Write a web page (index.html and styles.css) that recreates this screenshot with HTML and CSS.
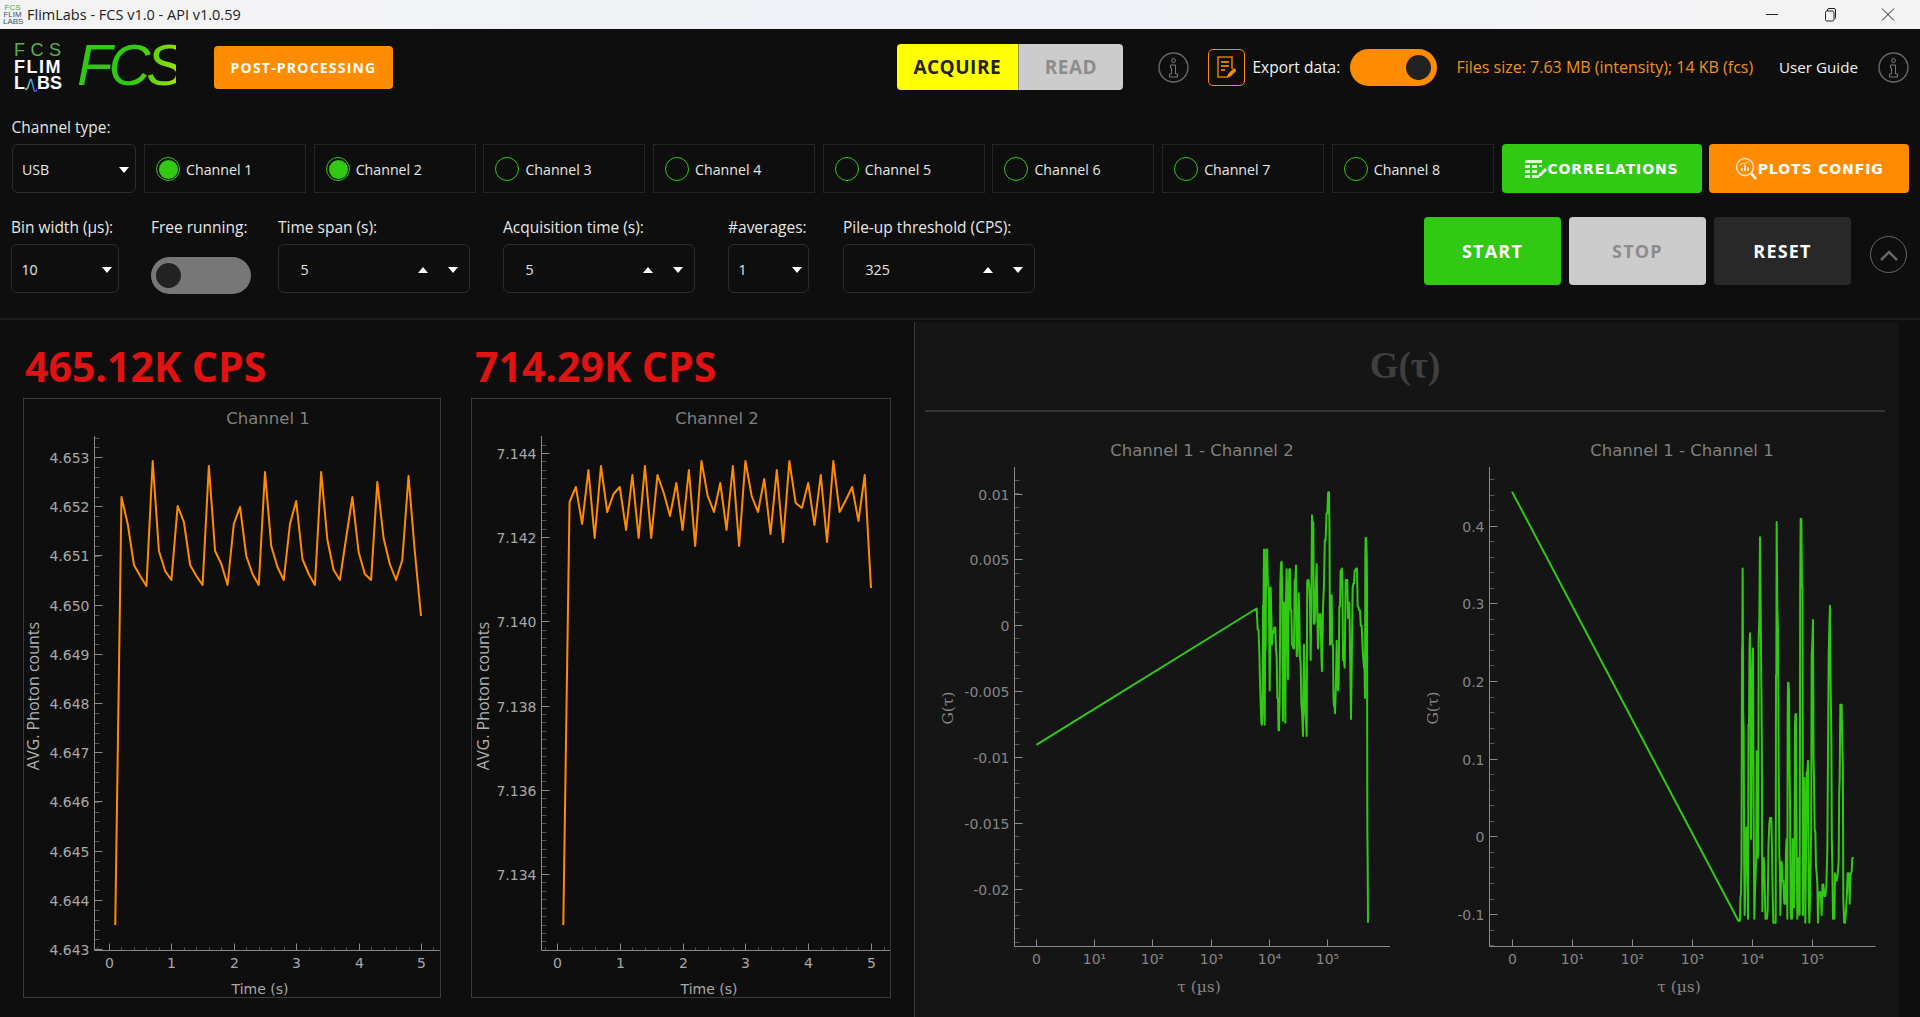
FILE: index.html
```html
<!DOCTYPE html>
<html lang="en">

<head>
    <meta charset="UTF-8" />
    <title>FlimLabs - FCS v1.0 - API v1.0.59</title>
    <link rel="stylesheet" href="styles.css">
</head>

<body>
    <div class="titlebar">
        <div class="title-logo">
            <span class="title-logo-fcs">FCS</span>
            <span>FLIM</span>
            <span>LABS</span>
        </div>
        <span class="title-text">FlimLabs - FCS v1.0 - API v1.0.59</span>
        <div class="window-btns">
            <svg width="58" height="29" viewBox="0 0 58 29"><path d="M23 14.5h12" stroke="#222" fill="none" /></svg>
            <svg width="58" height="29" viewBox="0 0 58 29"><path d="M24.5 12.5q0-1.500 1.500-1.500h5.500q1.500 0 1.500 1.500v7q0 1.500-1.500 1.500h-5.500q-1.500 0-1.500-1.500zM26.500 11v-1q0-1.500 1.500-1.500h5q1.500 0 1.500 1.500v7.500q0 1.200-1 1.500" stroke="#222" fill="none" /></svg>
            <svg width="58" height="29" viewBox="0 0 58 29"><path d="M23 8.500l12 12M35 8.500l-12 12" stroke="#222" fill="none" /></svg>
        </div>
    </div>

    <div class="toolbar">
        <div class="top-row">
            <div class="logo">
                <span class="logo-fcs">FCS</span>
                <span class="logo-flim">FLIM</span>
                <span class="logo-labs">L<svg width="15" height="16" viewBox="0 0 15 16"><defs><linearGradient id="wave" x1="0" x2="1"><stop offset="0" stop-color="#6fe0c0" /><stop offset="0.6" stop-color="#3a9ad0" /><stop offset="1" stop-color="#5a30d0" /></linearGradient></defs><path d="M0 14Q3 16 5 8T8 3T11 14T15 14" stroke="url(#wave)" stroke-width="2" fill="none" /></svg>BS</span>
            </div>
            <span class="brand">FCS</span>
            <button class="post-btn">POST-PROCESSING</button>

            <div class="top-right">
                <div class="mode-switch">
                    <span class="mode mode-acquire">ACQUIRE</span>
                    <span class="mode mode-read">READ</span>
                </div>
                <svg class="info-icon info-first" width="31" height="31" viewBox="0 0 31 31">
                    <circle cx="15.500" cy="15.500" r="14.500" stroke="#666" stroke-width="1.500" fill="none" />
                    <circle cx="15.500" cy="8.500" r="2" stroke="#777" fill="none" />
                    <path d="M12.500 13h5v9h2v3h-8v-3h2v-6h-1z" stroke="#777" fill="none" />
                </svg>
                <div class="export-icon">
                    <svg width="20" height="25" viewBox="0 0 20 25">
                        <path d="M12 22H2V2h14v12" stroke="#d97800" stroke-width="1.600" fill="none" />
                        <path d="M5 7h8M5 11h8M5 15h4" stroke="#d97800" stroke-width="2" fill="none" />
                        <path d="M11 23l1-4 6-6 2.500 2.500-6 6z" fill="#ff8c00" />
                    </svg>
                </div>
                <span class="export-label">Export data:</span>
                <div class="switch switch-on"><span class="knob"></span></div>
                <span class="files-size">Files size: 7.63 MB (intensity); 14 KB (fcs)</span>
                <span class="user-guide">User Guide</span>
                <svg class="info-icon" width="31" height="31" viewBox="0 0 31 31">
                    <circle cx="15.500" cy="15.500" r="14.500" stroke="#666" stroke-width="1.500" fill="none" />
                    <circle cx="15.500" cy="8.500" r="2" stroke="#777" fill="none" />
                    <path d="M12.500 13h5v9h2v3h-8v-3h2v-6h-1z" stroke="#777" fill="none" />
                </svg>
            </div>
        </div>

        <div class="channel-row">
            <div class="field">
                <label>Channel type:</label>
                <div class="control select-usb"><span>USB</span><i class="arrow-down"></i></div>
            </div>
            <div class="channels">
                <div class="channel"><span class="radio radio-on"></span>Channel 1</div>
                <div class="channel"><span class="radio radio-on"></span>Channel 2</div>
                <div class="channel"><span class="radio"></span>Channel 3</div>
                <div class="channel"><span class="radio"></span>Channel 4</div>
                <div class="channel"><span class="radio"></span>Channel 5</div>
                <div class="channel"><span class="radio"></span>Channel 6</div>
                <div class="channel"><span class="radio"></span>Channel 7</div>
                <div class="channel"><span class="radio"></span>Channel 8</div>
                <button class="action-btn btn-green">
                    <svg width="23" height="20" viewBox="0 0 23 20">
                        <path d="M1 1h17v3H1zM1 6h5v3H1zM8 6h5v3H8zM15 6h3v2h-3zM1 11h5v3H1zM8 11h5v3H8zM1 16h5v3H1zM8 16h7v3H8z" fill="#dff7d8" />
                        <path d="M14 18l1-3 6-6 2 2-6 6z" fill="#fff" />
                    </svg>
                    CORRELATIONS
                </button>
                <button class="action-btn btn-orange">
                    <svg width="23" height="24" viewBox="0 0 23 24">
                        <circle cx="10" cy="10" r="8.500" stroke="#ffe3c0" stroke-width="1.500" fill="none" />
                        <path d="M6 14v-3h2v3zM9 14V8h2v6zM12 14v-4h2v4z" fill="#ffe3c0" />
                        <path d="M5 8l3-2 2 1 4-3" stroke="#ffe3c0" fill="none" />
                        <path d="M16 16l5 6" stroke="#fff" stroke-width="2.500" />
                    </svg>
                    PLOTS CONFIG
                </button>
            </div>
        </div>

        <div class="settings-row">
            <div class="field field-bin">
                <label>Bin width (µs):</label>
                <div class="control"><span>10</span><i class="arrow-down"></i></div>
            </div>
            <div class="field field-free">
                <label>Free running:</label>
                <div class="switch switch-off"><span class="knob"></span></div>
            </div>
            <div class="field field-spin">
                <label>Time span (s):</label>
                <div class="control spin"><span>5</span><i class="arrow-up"></i><i class="arrow-down"></i></div>
            </div>
            <div class="field field-spin">
                <label>Acquisition time (s):</label>
                <div class="control spin"><span>5</span><i class="arrow-up"></i><i class="arrow-down"></i></div>
            </div>
            <div class="field field-avg">
                <label>#averages:</label>
                <div class="control"><span>1</span><i class="arrow-down"></i></div>
            </div>
            <div class="field field-spin">
                <label>Pile-up threshold (CPS):</label>
                <div class="control spin"><span>325</span><i class="arrow-up"></i><i class="arrow-down"></i></div>
            </div>

            <div class="run-btns">
                <button class="run-btn btn-green">START</button>
                <button class="run-btn btn-stop">STOP</button>
                <button class="run-btn btn-reset">RESET</button>
                <div class="collapse-btn">
                    <svg width="20" height="12" viewBox="0 0 20 12"><path d="M2 11l8-8 8 8" stroke="#666" stroke-width="2.500" fill="none" /></svg>
                </div>
            </div>
        </div>
    </div>

    <div class="content">
        <div class="rates">
            <div class="rate-card card-one">
                <div class="cps">465.12K CPS</div>
                <svg class="rate-plot" id="plot-ch1" viewBox="24 399 416 598"></svg>
            </div>
            <div class="rate-card card-two">
                <div class="cps">714.29K CPS</div>
                <svg class="rate-plot" id="plot-ch2" viewBox="472 399 418 598"></svg>
            </div>
        </div>
        <div class="correlations">
            <div class="corr-title">G(τ)</div>
            <div class="corr-plots">
                <svg class="corr-plot plot-left" id="plot-g12" viewBox="925 412 490 605"></svg>
                <svg class="corr-plot plot-right" id="plot-g11" viewBox="1415 412 470 605"></svg>
            </div>
        </div>
    </div>

    <script src="charts.js"></script>
</body>

</html>
```

FILE: styles.css
```css
* {
    box-sizing: border-box;
}

body {
    margin: 0;
    height: 1017px;
    overflow: hidden;
    background-color: #0e0e0e;
    color: #e6e6e6;
    font-family: 'Open Sans', sans-serif;
    font-size: 14px;
}

button {
    border: none;
    color: white;
    font-family: 'Open Sans', sans-serif;
    font-weight: bold;
    padding: 0;
}

/* window title bar */
.titlebar {
    display: flex;
    align-items: center;
    height: 29px;
    padding-left: 3px;
    background: linear-gradient(90deg, #f3f3f3, #f0f2f8 50%, #f3f3f3);
    color: #222;
}

.title-logo {
    display: flex;
    flex-direction: column;
    width: 19px;
    font-family: 'Liberation Sans', sans-serif;
    font-size: 8px;
    line-height: 7px;
    color: #40506a;
    text-align: center;
}

.title-logo-fcs {
    color: #4fa53a;
}

.title-text {
    margin-left: 5px;
    font-size: 14.500px;
}

.window-btns {
    display: flex;
    margin-left: auto;
    padding-right: 3px;
}

/* toolbar */
.toolbar {
    height: 289px;
}

.top-row {
    display: flex;
    align-items: center;
    height: 76px;
    padding-left: 14px;
}

.logo {
    display: flex;
    flex-direction: column;
    width: 48px;
    font-family: 'Liberation Sans', sans-serif;
    font-size: 18px;
    font-weight: bold;
    line-height: 16.500px;
    color: white;
    white-space: nowrap;
}

.logo-fcs {
    color: #5cb247;
    font-weight: normal;
    letter-spacing: 5.500px;
}

.logo-flim {
    letter-spacing: 1.500px;
}

.logo-labs {
    display: flex;
    align-items: center;
}

.brand {
    width: 99px;
    margin-left: 15px;
    margin-right: 2px;
    margin-bottom: 5px;
    font-family: 'Liberation Sans', sans-serif;
    font-size: 58px;
    font-style: italic;
    line-height: 64px;
    letter-spacing: -4px;
    white-space: nowrap;
    background: linear-gradient(100deg, #2fc812 55%, #a4e40a);
    -webkit-background-clip: text;
    background-clip: text;
    color: transparent;
}

.post-btn {
    width: 179px;
    height: 43px;
    margin-left: 36px;
    border-radius: 4px;
    background-color: #ff8c00;
    font-size: 14px;
    letter-spacing: 1.200px;
}

.top-right {
    display: flex;
    align-items: center;
    margin-left: auto;
    padding-right: 11px;
}

.mode-switch {
    display: flex;
    height: 46px;
    border-radius: 4px;
    overflow: hidden;
    font-size: 19px;
    font-weight: bold;
    letter-spacing: 0.500px;
}

.mode {
    display: flex;
    align-items: center;
    justify-content: center;
}

.mode-acquire {
    width: 121.500px;
    background-color: #ffff00;
    color: #222;
}

.mode-read {
    width: 105px;
    background-color: #cccccc;
    color: #8c8c8c;
    border-left: 1px solid #888;
}

.info-first {
    margin-left: 35px;
}

.export-icon {
    display: flex;
    align-items: center;
    justify-content: center;
    width: 36.500px;
    height: 37px;
    margin-left: 19px;
    border: 1px solid #ff8c00;
    border-radius: 5px;
}

.export-label {
    width: 88px;
    margin-left: 8px;
    font-size: 15.500px;
    white-space: nowrap;
    color: #f2f2f2;
}

.switch {
    display: flex;
    align-items: center;
    height: 37px;
    border-radius: 19px;
}

.switch-on {
    width: 87px;
    margin-left: 9px;
    padding-right: 6px;
    justify-content: flex-end;
    background-color: #ff8c00;
}

.switch-off {
    width: 100px;
    margin-top: 13px;
    padding-left: 5px;
    background-color: #777;
}

.knob {
    width: 25px;
    height: 25px;
    border-radius: 50%;
    background-color: #222;
}

.files-size {
    width: 299.500px;
    margin-left: 20px;
    font-size: 16px;
    white-space: nowrap;
    color: #ec9220;
}

.user-guide {
    width: 78px;
    margin-left: 23px;
    margin-right: 21px;
    font-size: 15.200px;
    white-space: nowrap;
    color: #f2f2f2;
}

/* channel row and settings row */
.channel-row {
    display: flex;
    padding: 10px 11px 0 11.500px;
}

.settings-row {
    display: flex;
    margin-top: 22px;
    padding: 0 13px 0 11px;
}

.field {
    display: flex;
    flex-direction: column;
    margin-right: 34px;
}

.field label {
    height: 29px;
    font-size: 15.500px;
    line-height: 24px;
    white-space: nowrap;
    color: #e6e6e6;
}

.control {
    display: flex;
    align-items: center;
    height: 49px;
    padding: 2px 6px 0 9.500px;
    border: 1.500px solid #2c2c2c;
    border-radius: 6px;
    font-size: 14.200px;
}

.control span {
    flex: 1;
}

.select-usb {
    width: 124px;
}

.field-bin {
    width: 107.500px;
    margin-right: 32.500px;
}

.field-free {
    width: 100px;
    margin-right: 27px;
}

.field-spin {
    width: 192px;
    margin-right: 33px;
}

.field-avg {
    width: 81px;
}

.spin {
    padding: 2px 11px 0 21.500px;
    gap: 20px;
}

.arrow-down,
.arrow-up {
    width: 0;
    height: 0;
    border-left: 5px solid transparent;
    border-right: 5px solid transparent;
}

.arrow-down {
    border-top: 6px solid white;
}

.arrow-up {
    border-bottom: 6px solid white;
}

.channels {
    display: flex;
    align-self: flex-end;
    gap: 7.700px;
    margin-left: -25.500px;
}

.channel {
    display: flex;
    align-items: center;
    gap: 6px;
    width: 162px;
    height: 49px;
    padding-left: 11px;
    padding-top: 1px;
    border: 1px solid #252525;
    font-size: 14.200px;
}

.radio {
    width: 24px;
    height: 24px;
    padding: 1.500px;
    border: 1.500px solid #31c914;
    border-radius: 50%;
}

.radio-on {
    background-color: #31c914;
    background-clip: content-box;
}

.action-btn {
    display: flex;
    align-items: center;
    justify-content: center;
    width: 200px;
    height: 49px;
    border-radius: 4px;
    font-family: 'DejaVu Sans', sans-serif;
    font-size: 14px;
    letter-spacing: 0.900px;
}

.btn-green {
    background-color: #31c914;
}

.btn-orange {
    background-color: #ff8c00;
}

.run-btns {
    display: flex;
    align-items: flex-start;
    gap: 8px;
    margin-left: auto;
    margin-top: 2px;
}

.run-btn {
    width: 137px;
    height: 68px;
    border-radius: 4px;
    font-size: 18px;
    letter-spacing: 1.200px;
}

.btn-stop {
    background-color: #cccccc;
    color: #8c8c8c;
}

.btn-reset {
    background-color: #282828;
}

.collapse-btn {
    display: flex;
    align-items: center;
    justify-content: center;
    width: 37px;
    height: 37px;
    margin: 19px 0 0 11px;
    border: 1.500px solid #666;
    border-radius: 50%;
}

/* plots */
.content {
    display: flex;
    height: 699px;
    border-top: 2px solid #1c1c1c;
}

.rates {
    display: flex;
    width: 914px;
}

.rate-card {
    display: flex;
    flex-direction: column;
}

.card-one {
    width: 418px;
    margin-left: 23px;
}

.card-two {
    width: 420px;
    margin-left: 30px;
}

.cps {
    height: 78px;
    padding: 15px 0 0 2px;
    font-size: 41px;
    font-weight: bold;
    line-height: 62px;
    white-space: nowrap;
    color: #e01212;
}

.card-two .cps {
    padding-left: 4px;
}

.rate-plot {
    display: block;
    width: 100%;
    height: 600px;
    border: 1px solid #3a3a3a;
}

.correlations {
    width: 984px;
    margin-top: 2px;
    border-left: 1px solid #3a3a3a;
    background-color: #151515;
}

.corr-title {
    height: 90px;
    margin: 0 13px 0 10px;
    border-bottom: 2px solid #333;
    font-family: 'Liberation Serif', serif;
    font-size: 37px;
    font-weight: bold;
    line-height: 88px;
    text-align: center;
    color: #3f3f3f;
}

.corr-plots {
    display: flex;
    margin-left: 10px;
}

.corr-plot {
    display: block;
    height: 605px;
}

.plot-left {
    width: 490px;
}

.plot-right {
    width: 470px;
}

.plot-title {
    font-family: 'DejaVu Sans', sans-serif;
    font-size: 16.500px;
    fill: #808080;
    text-anchor: middle;
}

.tick-label {
    font-family: 'DejaVu Sans', sans-serif;
    font-size: 14px;
    fill: #a8a8a8;
}

.corr-plot .tick-label {
    fill: #858585;
}

.axis-name {
    font-family: 'DejaVu Sans', sans-serif;
    font-size: 14px;
    fill: #a8a8a8;
    text-anchor: middle;
}

.axis-name-side {
    font-family: 'Open Sans', sans-serif;
    font-size: 16px;
    fill: #b0b0b0;
}

.axis-name-serif {
    font-family: 'DejaVu Serif', serif;
    font-size: 15.500px;
    fill: #858585;
}

.axis {
    stroke: #8a8a8a;
    stroke-width: 1;
    fill: none;
}

.minor {
    stroke: #555;
    stroke-width: 1;
}

.trace {
    fill: none;
    stroke-width: 2;
    stroke-linejoin: round;
}

.trace-orange {
    stroke: #ff8c00;
}

.trace-green {
    stroke: #31c914;
}
```

FILE: charts.js
```js
const SVG_NS = 'http://www.w3.org/2000/svg';

function add(svg, tag, attrs, text) {
    const el = document.createElementNS(SVG_NS, tag);
    Object.keys(attrs).forEach(k => el.setAttribute(k, attrs[k]));
    if (text !== undefined) el.textContent = text;
    svg.appendChild(el);
    return el;
}

function drawPlot(id, p) {
    const svg = document.getElementById(id);

    add(svg, 'text', { class: 'plot-title', x: p.titleX, y: p.titleY }, p.title);

    // minor ticks first, so major ones sit on top
    for (let y = p.yMinorStart; y < p.bottom; y += p.yMinorStep) {
        add(svg, 'line', { class: 'minor', x1: p.left, x2: p.left + 5, y1: Math.round(y) + 0.5, y2: Math.round(y) + 0.5 });
    }
    (p.xMinor || []).forEach(x => {
        add(svg, 'line', { class: 'minor', x1: Math.round(x) + 0.5, x2: Math.round(x) + 0.5, y1: p.bottom - 3, y2: p.bottom });
    });

    p.yTicks.forEach(t => {
        const y = Math.round(t[1]) + 0.5;
        add(svg, 'line', { class: 'axis', x1: p.left, x2: p.left + 8, y1: y, y2: y });
        add(svg, 'text', { class: 'tick-label', x: p.left - 5, y: y + 5, 'text-anchor': 'end' }, t[0]);
    });
    p.xTicks.forEach(t => {
        const x = Math.round(t[1]) + 0.5;
        add(svg, 'line', { class: 'axis', x1: x, x2: x, y1: p.bottom - 7, y2: p.bottom });
        add(svg, 'text', { class: 'tick-label', x: x, y: p.bottom + 17, 'text-anchor': 'middle' }, t[0]);
    });

    add(svg, 'path', {
        class: 'axis',
        d: `M${p.left} ${p.top}V${p.bottom}H${p.right}`
    });

    add(svg, 'text', { class: 'axis-name', x: p.xNameX, y: p.xNameY }, p.xName).classList.add(...p.nameClass);
    add(svg, 'text', {
        class: 'axis-name',
        transform: `translate(${p.yNameX} ${p.yNameY}) rotate(-90)`
    }, p.yName).classList.add(...p.sideClass);

    add(svg, 'polyline', { class: 'trace ' + p.traceClass, points: p.points.map(q => q.join(',')).join(' ') });
}

function range(from, to, step) {
    const out = [];
    for (let x = from; x <= to + 0.001; x += step) out.push(x);
    return out;
}

// the measured correlation traces are coarser than the real data, so fill each gap with a wobble
// kept between its two neighbours so the peaks stay where they were read off
function fillNoise(trace) {
    const out = [trace[0], trace[1]];
    for (let i = 2; i < trace.length; i++) {
        const a = trace[i - 1];
        const b = trace[i];
        const low = Math.min(a[1], b[1]);
        const high = Math.max(a[1], b[1]);
        const wobble = Math.sin(i * 12.9898) * 0.45 * (high - low) + Math.cos(i * 7.233) * 60;
        const y = Math.min(high, Math.max(low, (a[1] + b[1]) / 2 + wobble));
        out.push([(a[0] + b[0]) / 2, y]);
        out.push(b);
    }
    return out;
}

// photon count traces: one value per 0.1 s, stored as pixel rows
const ch1Rows = [925, 497, 524, 565, 576, 586, 461, 551, 571, 580, 506, 522, 565, 576, 585, 466, 551, 564, 585, 524, 507, 556, 574, 585, 472, 546, 567, 580, 524, 501, 559, 574, 585, 472, 540, 570, 580, 538, 497, 552, 574, 580, 482, 538, 564, 580, 560, 476, 551, 616];
const ch2Rows = [925, 502, 487, 524, 470, 538, 466, 512, 494, 487, 530, 475, 538, 466, 538, 475, 493, 516, 483, 530, 470, 546, 461, 496, 512, 483, 530, 466, 546, 461, 496, 512, 479, 534, 470, 542, 461, 503, 508, 483, 525, 475, 542, 461, 512, 500, 487, 521, 475, 588];

const g12Trace = [[349, 853], [1010, 495], [1013, 550], [1018, 610], [1022, 740], [1026, 800], [1029, 490], [1032, 340], [1034, 800], [1037, 600], [1040, 340], [1043, 410], [1046, 440], [1049, 710], [1052, 440], [1056, 590], [1060, 560], [1066, 545], [1070, 620], [1074, 730], [1077, 815], [1081, 430], [1085, 372], [1089, 790], [1092, 480], [1096, 795], [1100, 392], [1104, 680], [1108, 392], [1112, 500], [1116, 590], [1120, 600], [1124, 420], [1128, 382], [1132, 620], [1136, 455], [1140, 625], [1144, 745], [1149, 830], [1152, 590], [1156, 770], [1160, 830], [1163, 420], [1168, 440], [1172, 630], [1176, 250], [1180, 270], [1183, 535], [1186, 480], [1190, 378], [1194, 600], [1198, 510], [1202, 510], [1206, 660], [1212, 430], [1217, 315], [1222, 245], [1227, 190], [1230, 590], [1235, 460], [1239, 590], [1242, 750], [1245, 770], [1250, 580], [1254, 710], [1258, 490], [1262, 395], [1266, 390], [1269, 630], [1274, 650], [1280, 420], [1284, 520], [1288, 480], [1293, 785], [1298, 440], [1302, 430], [1306, 395], [1311, 390], [1315, 490], [1320, 500], [1325, 540], [1332, 650], [1335, 730], [1337, 310], [1340, 350], [1342, 1080], [1344, 1320]];
const g11Trace = [[276, 188], [955, 1315], [960, 1315], [963, 1245], [966, 610], [968, 390], [971, 820], [974, 1300], [977, 1180], [980, 1070], [984, 1310], [987, 800], [990, 560], [993, 1100], [996, 680], [999, 600], [1003, 1310], [1007, 1190], [1010, 870], [1013, 1150], [1016, 570], [1020, 308], [1024, 700], [1027, 1290], [1031, 1150], [1035, 1260], [1038, 1310], [1043, 1290], [1048, 1060], [1052, 1045], [1056, 1130], [1060, 1320], [1066, 1320], [1068, 670], [1070, 268], [1074, 550], [1078, 1140], [1081, 1300], [1085, 1160], [1090, 1210], [1096, 1270], [1100, 1100], [1102, 1310], [1104, 690], [1107, 710], [1110, 1000], [1114, 1310], [1118, 1100], [1122, 1280], [1125, 800], [1128, 772], [1132, 1310], [1136, 1150], [1139, 1300], [1142, 260], [1146, 440], [1149, 1300], [1153, 940], [1156, 1320], [1160, 925], [1164, 895], [1168, 1320], [1172, 1160], [1175, 620], [1179, 525], [1182, 940], [1186, 1080], [1190, 1190], [1194, 1320], [1200, 1240], [1205, 1300], [1210, 1220], [1216, 1250], [1222, 1130], [1226, 620], [1230, 488], [1234, 825], [1237, 1170], [1241, 1310], [1245, 1190], [1250, 1210], [1256, 1160], [1259, 940], [1263, 748], [1267, 850], [1270, 1260], [1275, 1320], [1281, 1240], [1285, 1190], [1289, 1270], [1293, 1190], [1297, 1150], [1300, 1148]];

const seconds = ['0', '1', '2', '3', '4', '5'];
const decades = ['0', '10¹', '10²', '10³', '10⁴', '10⁵'];

drawPlot('plot-ch1', {
    title: 'Channel 1', titleX: 268, titleY: 424,
    left: 94.5, right: 440, top: 436, bottom: 950.5,
    yMinorStart: 437.6, yMinorStep: 9.84,
    yTicks: ['4.653', '4.652', '4.651', '4.650', '4.649', '4.648', '4.647', '4.646', '4.645', '4.644', '4.643'].map((s, i) => [s, 457 + i * 49.2]),
    xTicks: seconds.map((s, i) => [s, 109 + i * 62.4]),
    xMinor: range(96.5, 434, 12.48),
    xName: 'Time (s)', xNameX: 260, xNameY: 994, nameClass: [],
    yName: 'AVG. Photon counts', yNameX: 39, yNameY: 696, sideClass: ['axis-name-side'],
    traceClass: 'trace-orange',
    points: ch1Rows.map((y, i) => [109 + (i + 1) * 6.24, y])
});

drawPlot('plot-ch2', {
    title: 'Channel 2', titleX: 717, titleY: 424,
    left: 541.5, right: 890, top: 436, bottom: 950.5,
    yMinorStart: 444.6, yMinorStep: 8.42,
    yTicks: ['7.144', '7.142', '7.140', '7.138', '7.136', '7.134'].map((s, i) => [s, 453 + i * 84.2]),
    xTicks: seconds.map((s, i) => [s, 557 + i * 62.8]),
    xMinor: range(544.5, 885, 12.56),
    xName: 'Time (s)', xNameX: 709, xNameY: 994, nameClass: [],
    yName: 'AVG. Photon counts', yNameX: 489, yNameY: 696, sideClass: ['axis-name-side'],
    traceClass: 'trace-orange',
    points: ch2Rows.map((y, i) => [557 + (i + 1) * 6.28, y])
});

drawPlot('plot-g12', {
    title: 'Channel 1 - Channel 2', titleX: 1202, titleY: 456,
    left: 1014.5, right: 1390, top: 467, bottom: 946.5,
    yMinorStart: 480.3, yMinorStep: 13.18,
    yTicks: ['0.01', '0.005', '0', '-0.005', '-0.01', '-0.015', '-0.02'].map((s, i) => [s, 493.5 + i * 65.9]),
    xTicks: decades.map((s, i) => [s, 1036 + i * 58.2]),
    xName: 'τ (µs)', xNameX: 1199, xNameY: 992, nameClass: ['axis-name-serif'],
    yName: 'G(τ)', yNameX: 953, yNameY: 708, sideClass: ['axis-name-serif'],
    traceClass: 'trace-green',
    points: fillNoise(g12Trace).map(q => [920 + q[0] / 3, 420 + q[1] / 2.626])
});

drawPlot('plot-g11', {
    title: 'Channel 1 - Channel 1', titleX: 1682, titleY: 456,
    left: 1489.5, right: 1875.5, top: 467, bottom: 946.5,
    yMinorStart: 479, yMinorStep: 15.54,
    yTicks: ['0.4', '0.3', '0.2', '0.1', '0', '-0.1'].map((s, i) => [s, 525.5 + i * 77.7]),
    xTicks: decades.map((s, i) => [s, 1512 + i * 59.9]),
    xName: 'τ (µs)', xNameX: 1679, xNameY: 992, nameClass: ['axis-name-serif'],
    yName: 'G(τ)', yNameX: 1438, yNameY: 708, sideClass: ['axis-name-serif'],
    traceClass: 'trace-green',
    points: fillNoise(g11Trace).map(q => [1420 + q[0] / 3, 420 + q[1] / 2.626])
});
```
